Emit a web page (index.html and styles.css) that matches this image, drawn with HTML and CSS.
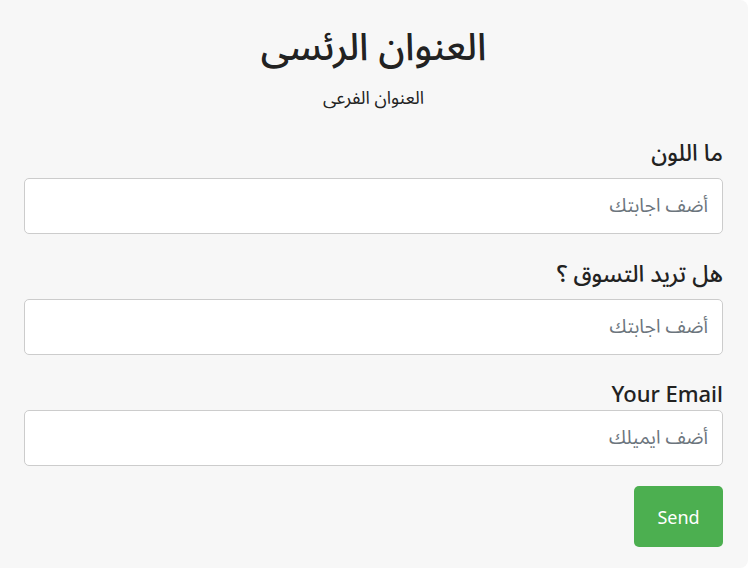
FILE: index.html
```html
<!DOCTYPE html>
<html lang="ar" dir="rtl">
<head>
    <meta charset="UTF-8">
    <meta name="viewport" content="width=device-width, initial-scale=1.0">
    <title>العنوان الرئسى</title>
    <link rel="stylesheet" href="styles.css">
</head>
<body>
    <div class="card">
        <header class="form-header">
            <h1>العنوان الرئسى</h1>
            <p>العنوان الفرعى</p>
        </header>
        <form class="survey">
            <div class="form-group first">
                <label for="color">ما اللون</label>
                <input type="text" id="color" class="input-field" placeholder="أضف اجابتك">
            </div>
            <div class="form-group">
                <label for="shopping">هل تريد التسوق ؟</label>
                <input type="text" id="shopping" class="input-field" placeholder="أضف اجابتك">
            </div>
            <div class="form-group email">
                <label for="email">Your Email</label>
                <input type="email" id="email" class="input-field" placeholder="أضف ايميلك">
            </div>
            <button type="submit" class="button">Send</button>
        </form>
    </div>
</body>
</html>
```

FILE: styles.css
```css
body {
    font-family: "Noto Sans Arabic", "DejaVu Sans", "Noto Sans", sans-serif;
    margin: 0;
    padding: 0;
    background-color: #fff;
    color: #222;
}
.card {
    height: 568px;
    box-sizing: border-box;
    margin: 0 2px 0 0;
    background-color: #f7f7f7;
    border-radius: 0 8px 8px 0;
    padding: 24px 25px 0 24px;
}
.form-header {
    text-align: center;
}
.form-header h1 {
    font-size: 38px;
    font-weight: 500;
    margin: 0;
    line-height: 48px;
}
.form-header p {
    font-size: 18px;
    margin: 14px 0 0;
    line-height: 24px;
}
.form-group {
    margin-top: 23px;
}
.form-group.first {
    margin-top: 26px;
}
.form-group label {
    display: block;
    font-size: 23px;
    font-weight: 500;
    line-height: 36px;
    margin-bottom: 6px;
}
.form-group.email label {
    font-family: "Noto Sans", sans-serif;
    font-size: 22px;
    line-height: 30px;
    margin-bottom: 2px;
}
.input-field {
    display: block;
    width: 100%;
    height: 56px;
    box-sizing: border-box;
    padding: 0 14px;
    border: 1px solid #ccc;
    border-radius: 5px;
    background: #fff;
    font-family: inherit;
    font-size: 19px;
    color: #333;
}
.input-field::placeholder {
    color: #6c757d;
}
.button {
    display: block;
    margin-top: 20px;
    width: 89px;
    height: 61px;
    background-color: #4caf50;
    color: white;
    border: none;
    border-radius: 5px;
    font-family: "Noto Sans", sans-serif;
    font-size: 18px;
    cursor: pointer;
}
```
